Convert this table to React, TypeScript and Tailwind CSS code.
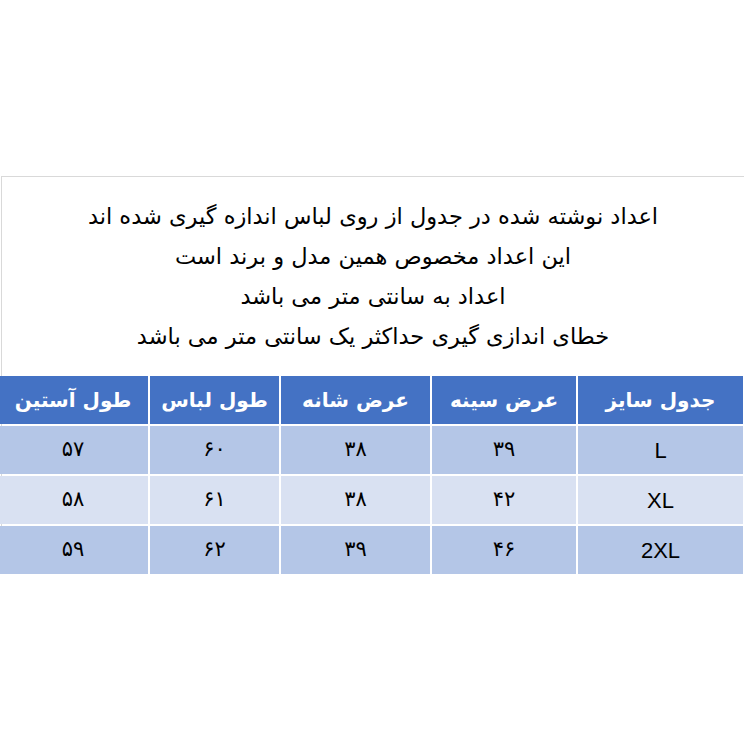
const lines = [
  'اعداد نوشته شده در جدول از روی لباس اندازه گیری شده اند',
  'این اعداد مخصوص همین مدل و برند است',
  'اعداد به سانتی متر می باشد',
  'خطای اندازی گیری حداکثر یک سانتی متر می باشد',
]

const headers = ['جدول سایز', 'عرض سینه', 'عرض شانه', 'طول لباس', 'طول آستین']

const rows = [
  ['L', '۳۹', '۳۸', '۶۰', '۵۷'],
  ['XL', '۴۲', '۳۸', '۶۱', '۵۸'],
  ['2XL', '۴۶', '۳۹', '۶۲', '۵۹'],
]

export default function App() {
  return (
    <div className="h-[745px] w-[745px] bg-white pt-[176px]">
      <div className="ml-[1px] w-[743px] border-t border-l border-[#d9d9d9]">
        <div
          dir="rtl"
          className="flex h-[199px] flex-col items-center pt-[19px] text-[22.5px] leading-[40px] text-black"
          style={{ fontFamily: '"DejaVu Sans", sans-serif' }}
        >
          {lines.map((l) => (
            <div key={l}>{l}</div>
          ))}
        </div>
        <div
          dir="rtl"
          className="grid w-[741px] grid-cols-[165px_144px_149px_129px_150px] gap-[2px] bg-white"
          style={{ fontFamily: '"DejaVu Sans", sans-serif' }}
        >
          {headers.map((h) => (
            <div
              key={h}
              className="flex h-[48px] items-center justify-center bg-[#4472c4] text-[20px] font-bold text-white"
            >
              {h}
            </div>
          ))}
          {rows.map((r, i) =>
            r.map((c, j) => (
              <div
                key={`${i}-${j}`}
                className={`flex h-[48px] items-center justify-center text-black ${
                  j === 0 ? "font-['Liberation_Sans'] text-[22px]" : 'text-[21px]'
                } ${i === 1 ? 'bg-[#d9e1f2]' : 'bg-[#b4c6e7]'}`}
              >
                {c}
              </div>
            ))
          )}
        </div>
      </div>
    </div>
  )
}
